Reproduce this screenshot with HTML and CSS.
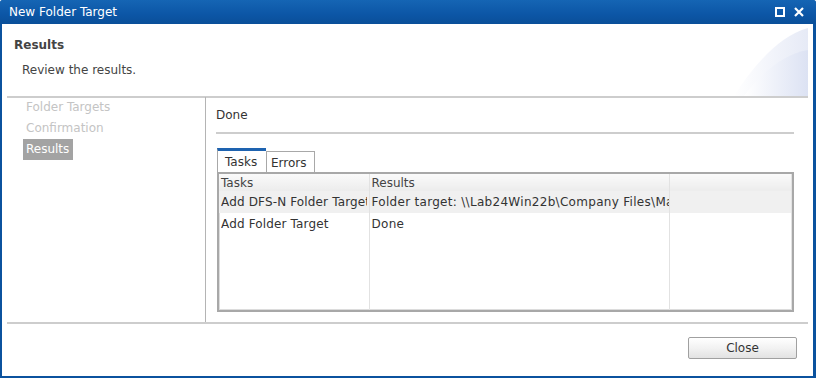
FILE: index.html
```html
<!DOCTYPE html>
<html lang="en">
<head>
    <meta charset="UTF-8">
    <title>New Folder Target</title>
    <link rel="stylesheet" href="styles.css">
</head>
<body>

    <div class="window">
        <!-- Title bar -->
        <div class="titlebar">
            <span class="title">New Folder Target</span>
            <span class="controls">
                <svg width="10" height="10" viewBox="0 0 10 10"><rect x="1" y="1" width="8" height="8" fill="none" stroke="#fff" stroke-width="2"/></svg>
                <svg width="10" height="10" viewBox="0 0 10 10"><path d="M1 1 L9 9 M9 1 L1 9" stroke="#fff" stroke-width="2.2"/></svg>
            </span>
        </div>

        <div class="content">
            <!-- Header -->
            <div class="header">
                <h1>Results</h1>
                <p>Review the results.</p>
                <svg class="swoosh" width="74" height="68" viewBox="0 0 74 68">
                    <defs>
                        <linearGradient id="g1" x1="0" y1="0" x2="1" y2="0">
                            <stop offset="0" stop-color="#ffffff"/>
                            <stop offset="1" stop-color="#e6eaf6"/>
                        </linearGradient>
                        <linearGradient id="g2" x1="0" y1="0" x2="1" y2="0">
                            <stop offset="0" stop-color="#ffffff"/>
                            <stop offset="1" stop-color="#dce2f3"/>
                        </linearGradient>
                    </defs>
                    <path d="M0 68 C18 40 44 8 74 0 L74 68 Z" fill="url(#g1)"/>
                    <path d="M10 68 C28 44 50 26 74 22 L74 68 Z" fill="url(#g2)"/>
                </svg>
            </div>

            <!-- Main -->
            <div class="main">
                <ul class="steps">
                    <li class="done">Folder Targets</li>
                    <li class="done">Confirmation</li>
                    <li><span class="current">Results</span></li>
                </ul>

                <div class="pane">
                    <div class="status">Done</div>

                    <div class="tabs">
                        <span class="tab active">Tasks</span>
                        <span class="tab errors">Errors</span>
                    </div>

                    <div class="grid">
                        <table>
                            <thead>
                                <tr>
                                    <th class="c1">Tasks</th>
                                    <th class="c2">Results</th>
                                    <th></th>
                                </tr>
                            </thead>
                            <tbody>
                                <tr class="alt">
                                    <td class="c1"><div class="clip">Add DFS-N Folder Target</div></td>
                                    <td class="c2"><div class="clip">Folder target: \\Lab24Win22b\Company Files\Marketing</div></td>
                                    <td></td>
                                </tr>
                                <tr>
                                    <td class="c1"><div class="clip">Add Folder Target</div></td>
                                    <td class="c2"><div class="clip">Done</div></td>
                                    <td></td>
                                </tr>
                                <tr class="empty"><td></td><td></td><td></td></tr>
                            </tbody>
                        </table>
                    </div>
                </div>
            </div>

            <!-- Footer -->
            <div class="footer">
                <button class="btn">Close</button>
            </div>
        </div>
    </div>

</body>
</html>
```

FILE: styles.css
```css
* {
    margin: 0;
    padding: 0;
    box-sizing: border-box;
}
body {
    font-family: "DejaVu Sans", Verdana, sans-serif;
    font-size: 12px;
    color: #333;
    background: #fff;
}
.window {
    width: 816px;
    height: 378px;
    display: flex;
    flex-direction: column;
    background: #0b529e;
    padding: 0 3px 2px 2px;
    border-radius: 3px 3px 0 0;
}
.titlebar {
    height: 24px;
    margin: 0 -3px 0 -2px;
    padding: 0 12px 0 9px;
    display: flex;
    align-items: center;
    justify-content: space-between;
    background: linear-gradient(#1565b4, #0c56a6 60%, #0a4f99);
    border-radius: 3px 3px 0 0;
}
.title {
    color: #fff;
    font-size: 12px;
}
.controls {
    display: flex;
    gap: 9px;
    align-items: center;
}
.controls svg {
    display: block;
}
.content {
    flex: 1;
    background: #fff;
    padding: 0 5px;
    display: flex;
    flex-direction: column;
}
.header {
    position: relative;
    height: 72px;
    padding: 13px 0 0 7px;
}
.header h1 {
    font-size: 12px;
    font-weight: bold;
    color: #444;
    line-height: 16px;
}
.header p {
    margin-top: 9px;
    padding-left: 8px;
    color: #444;
    line-height: 16px;
}
.swoosh {
    position: absolute;
    right: 0;
    top: 4px;
}
.main {
    height: 228px;
    display: flex;
    border-top: 2px solid #cdcdcd;
    border-bottom: 2px solid #cdcdcd;
}
.steps {
    list-style: none;
    width: 199px;
    border-right: 1px solid #b4b4b4;
    margin-top: -1px;
    padding: 0 0 0 19px;
}
.steps li {
    line-height: 21px;
    color: #c4c4c4;
}
.steps .current {
    display: inline-block;
    margin-left: -3px;
    background: #a3a3a3;
    color: #fff;
    padding: 0 4px 0 3px;
    line-height: 21px;
}
.pane {
    flex: 1;
    padding: 0 14px 0 10px;
    display: flex;
    flex-direction: column;
}
.status {
    line-height: 16px;
    padding: 9px 0 9px;
    border-bottom: 2px solid #cdcdcd;
    color: #333;
}
.tabs {
    display: flex;
    align-items: flex-end;
    margin-top: 14px;
    padding-left: 1px;
}
.tab {
    border: 1px solid #a8a8a8;
    border-bottom: none;
    line-height: 22px;
    height: 21px;
    color: #333;
}
.tab.active {
    width: 49px;
    padding-left: 7px;
    border-top: 3px solid #1e63b0;
    height: 24px;
    border-right: none;
}
.tab.errors {
    width: 49px;
    padding-left: 4px;
}
.grid {
    height: 140px;
    margin-left: 1px;
    border: 2px solid #a8a8a8;
    box-shadow: inset 0 0 0 1px #dcdcdc;
    overflow: hidden;
}
table {
    width: 100%;
    height: 100%;
    border-collapse: collapse;
    table-layout: fixed;
}
th, td {
    text-align: left;
    font-weight: normal;
    padding: 0 0 0 2px;
    border-right: 1px solid #e2e2e2;
    color: #333;
    vertical-align: middle;
}
th {
    height: 17px;
    background: linear-gradient(#fafafa, #ececec);
    color: #444;
    line-height: 16px;
}
td {
    height: 22px;
    letter-spacing: 0.15px;
}
.c1 {
    width: 150px;
}
td.c1 {
    padding-right: 2px;
}
.c2 {
    width: 300px;
}
td.c2 {
    letter-spacing: 0.3px;
}
.clip {
    white-space: nowrap;
    overflow: hidden;
}
tr.alt td {
    background: #f0f0f0;
}
tr.empty td {
    height: auto;
}
.footer {
    flex: 1;
    display: flex;
    justify-content: flex-end;
    align-items: flex-start;
    padding: 13px 11px 0 0;
}
.btn {
    width: 109px;
    height: 22px;
    font-family: inherit;
    font-size: 12px;
    color: #333;
    background: linear-gradient(#ffffff, #f2f2f2 50%, #e2e2e2);
    border: 1px solid #a0a0a0;
    border-radius: 2px;
    cursor: pointer;
}
```
